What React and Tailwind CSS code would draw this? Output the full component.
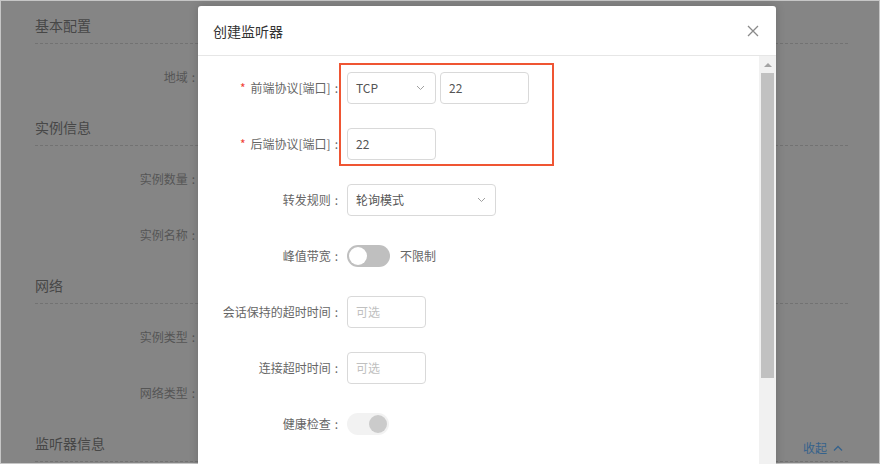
import React from 'react';

const sections = [
  { title: '基本配置', items: ['地域'] },
  { title: '实例信息', items: ['实例数量', '实例名称'] },
  { title: '网络', items: ['实例类型', '网络类型'] },
  { title: '监听器信息', items: [], collapse: true },
];

const Chevron = () => (
  <svg width="9" height="6" viewBox="0 0 9 6">
    <path d="M1 1 L4.5 4.5 L8 1" fill="none" stroke="#a0a0a0" strokeWidth="1" />
  </svg>
);

const FormRow = ({ label, required, children }) => (
  <div className="flex items-center h-[32px]">
    <div className="w-[140px] text-right text-[12px] leading-[16px] text-[#666] whitespace-nowrap">
      {required && <span className="text-[#f04134] mr-[5px]">*</span>}
      {label}
      <span className="ml-[4px]">:</span>
    </div>
    <div className="ml-[9px] flex items-center">{children}</div>
  </div>
);

const Box = ({ w, children, placeholder }) => (
  <div className={`${w} h-[32px] border border-[#d9d9d9] rounded-[4px] bg-white flex items-center px-[8px] text-[12px] leading-[16px] ${placeholder ? 'text-[#c0c0c0]' : 'text-[#555]'}`}>
    {children}
  </div>
);

const App = () => {
  return (
    <div className="relative w-[880px] h-[464px] overflow-hidden bg-[#858585] outline outline-1 -outline-offset-1 outline-[#c6c6c6] font-['Noto_Sans_CJK_SC','Noto_Sans',sans-serif]">
      {/* 背景页面 */}
      <div className="pl-[35px] pr-[32px]">
        {sections.map((sec) => (
          <div key={sec.title}>
            <div className="h-[44px] pt-[16px] border-b border-dashed border-[#727272] flex justify-between">
              <span className="text-[14px] leading-[18px] text-[#474747]">{sec.title}</span>
              {sec.collapse && (
                <span className="flex items-center gap-[6px] text-[12px] leading-[18px] text-[#35628c] mr-[5px]">
                  收起
                  <svg width="10" height="6" viewBox="0 0 10 6">
                    <path d="M1 5.5 L5 1.5 L9 5.5" fill="none" stroke="#35628c" strokeWidth="1.3" />
                  </svg>
                </span>
              )}
            </div>
            {sec.items.length > 0 && (
              <div className="pt-[21px] pb-[13px] flex flex-col gap-[32px]">
                {sec.items.map((it) => (
                  <div key={it} className="h-[24px] flex items-center">
                    <span className="w-[160px] text-right text-[12px] leading-[16px] text-[#555]">
                      {it}
                      <span className="ml-[4px]">:</span>
                    </span>
                  </div>
                ))}
              </div>
            )}
          </div>
        ))}
      </div>

      {/* 弹窗 */}
      <div className="absolute left-[198px] top-[6px] w-[578px] h-[470px] bg-white rounded-t-[3px] shadow-[0_0_10px_rgba(0,0,0,0.18)] flex flex-col">
        <div className="h-[50px] shrink-0 border-b border-[#e6e6e6] flex items-center justify-between pl-[15px] pr-[17px]">
          <span className="text-[14px] leading-[18px] text-[#333]">创建监听器</span>
          <svg width="12" height="12" viewBox="0 0 12 12">
            <path d="M1 1 L11 11 M11 1 L1 11" stroke="#8a8a8a" strokeWidth="1.3" />
          </svg>
        </div>
        <div className="flex-1 flex min-h-0">
          <div className="relative flex-1 pt-[16px] flex flex-col gap-[24px]">
            <FormRow label="前端协议[端口]" required>
              <div className="w-[89px] h-[32px] border border-[#d9d9d9] rounded-[4px] flex items-center justify-between pl-[8px] pr-[10px] text-[12px] leading-[16px] text-[#555]">
                TCP
                <Chevron />
              </div>
              <div className="ml-[4px]">
                <Box w="w-[89px]">22</Box>
              </div>
            </FormRow>
            <FormRow label="后端协议[端口]" required>
              <Box w="w-[89px]">22</Box>
            </FormRow>
            <FormRow label="转发规则">
              <div className="w-[149px] h-[32px] border border-[#d9d9d9] rounded-[4px] flex items-center justify-between pl-[8px] pr-[9px] text-[12px] leading-[16px] text-[#555]">
                轮询模式
                <Chevron />
              </div>
            </FormRow>
            <FormRow label="峰值带宽">
              <div className="w-[43px] h-[22px] rounded-full bg-[#bfbfbf] flex items-center px-[2px]">
                <div className="w-[18px] h-[18px] rounded-full bg-white" />
              </div>
              <span className="ml-[10px] text-[12px] leading-[16px] text-[#666]">不限制</span>
            </FormRow>
            <FormRow label="会话保持的超时时间">
              <Box w="w-[79px]" placeholder>可选</Box>
            </FormRow>
            <FormRow label="连接超时时间">
              <Box w="w-[79px]" placeholder>可选</Box>
            </FormRow>
            <FormRow label="健康检查">
              <div className="w-[42px] h-[22px] rounded-full bg-[#f2f2f2] flex items-center justify-end px-[2px]">
                <div className="w-[18px] h-[18px] rounded-full bg-[#cbcbcb]" />
              </div>
            </FormRow>

            {/* 标注框 */}
            <div className="absolute left-[141px] top-[7px] w-[215px] h-[103px] border-2 border-[#ef5533] pointer-events-none" />
          </div>

          {/* 滚动条 */}
          <div className="w-[17px] shrink-0 bg-[#f1f1f1] flex flex-col items-center">
            <div className="h-[17px] flex items-center justify-center">
              <svg width="8" height="5" viewBox="0 0 8 5">
                <path d="M0 5 L4 1 L8 5 Z" fill="#a3a3a3" />
              </svg>
            </div>
            <div className="w-[13px] h-[305px] bg-[#c1c1c1]" />
          </div>
        </div>
      </div>
    </div>
  );
};

export default App;
